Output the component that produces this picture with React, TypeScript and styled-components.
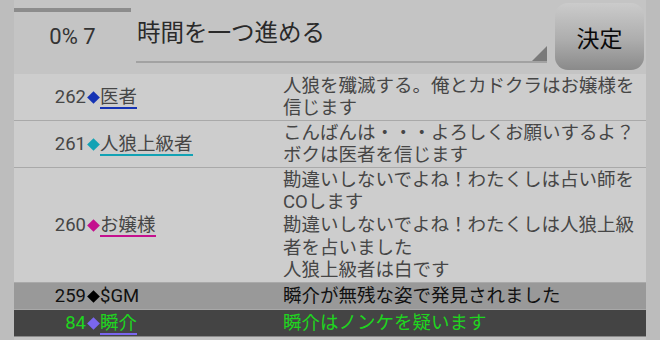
import React from 'react';
import styled, { createGlobalStyle } from 'styled-components';

const GlobalStyle = createGlobalStyle`
    html, body {
        margin: 0;
        padding: 0;
        background: #c2c2c2;
    }
    body {
        width: 660px;
        height: 340px;
        overflow: hidden;
        font-family: Roboto, 'Noto Sans CJK JP', 'Noto Sans', sans-serif;
    }
`;

type Kind = 'talk' | 'system' | 'self';

interface LogEntry {
    no: number;
    name: string;
    color: string;
    lines: string[];
    kind: Kind;
}

const logs: LogEntry[] = [
    { no: 262, name: '医者', color: '#1533b4', kind: 'talk', lines: ['人狼を殲滅する。俺とカドクラはお嬢様を信じます'] },
    { no: 261, name: '人狼上級者', color: '#12a2b4', kind: 'talk', lines: ['こんばんは・・・よろしくお願いするよ？ボクは医者を信じます'] },
    {
        no: 260,
        name: 'お嬢様',
        color: '#c4108e',
        kind: 'talk',
        lines: ['勘違いしないでよね！わたくしは占い師をCOします', '勘違いしないでよね！わたくしは人狼上級者を占いました', '人狼上級者は白です'],
    },
    { no: 259, name: '$GM', color: '#000000', kind: 'system', lines: ['瞬介が無残な姿で発見されました'] },
    { no: 84, name: '瞬介', color: '#7a66f0', kind: 'self', lines: ['瞬介はノンケを疑います'] },
];

const App: React.FC = () => {
    return (
        <Page>
            <GlobalStyle />
            <Header>
                <Status>
                    <Progress />
                    <StatusText>0% 7</StatusText>
                </Status>
                <Select>
                    <SelectText>時間を一つ進める</SelectText>
                    <Corner />
                </Select>
                <Decide>決定</Decide>
            </Header>
            <Log>
                {logs.map(log => (
                    <Row key={log.no} kind={log.kind}>
                        <No>{log.no}</No>
                        <DiamondCell>
                            <Diamond color={log.color} />
                        </DiamondCell>
                        <NameCell>
                            <Name color={log.color} underline={log.kind !== 'system'}>
                                {log.name}
                            </Name>
                        </NameCell>
                        <Message>
                            {log.lines.map((line, i) => (
                                <div key={i}>{line}</div>
                            ))}
                        </Message>
                    </Row>
                ))}
            </Log>
        </Page>
    );
};

export default App;

const Page = styled.div`
    width: 660px;
    height: 340px;
    overflow: hidden;
    background: linear-gradient(to right, #bdbdbd 0, #bdbdbd 14px, #c4c4c4 14px, #c4c4c4 646px, #bcbcbc 646px);
`;

const Header = styled.div`
    display: flex;
    align-items: flex-start;
    height: 74px;
    padding-left: 14px;
`;

const Status = styled.div`
    width: 117px;
    padding-top: 8px;
`;

const Progress = styled.div`
    height: 4px;
    background: #8c8c8c;
`;

const StatusText = styled.div`
    margin-top: 12px;
    text-align: center;
    font-size: 22px;
    line-height: 26px;
    color: #333;
`;

const Select = styled.div`
    position: relative;
    width: 411px;
    height: 61px;
    margin-left: 5px;
    border-bottom: 2px solid #a2a2a2;
`;

const SelectText = styled.div`
    padding: 18px 0 0 1px;
    font-size: 23.5px;
    line-height: 30px;
    color: #2a2a2a;
`;

const Corner = styled.div`
    position: absolute;
    right: 0;
    bottom: 0;
    width: 0;
    height: 0;
    border-left: 15px solid transparent;
    border-bottom: 15px solid #7a7a7a;
`;

const Decide = styled.div`
    display: flex;
    align-items: center;
    justify-content: center;
    width: 89px;
    height: 67px;
    margin: 3px 0 0 8px;
    border-radius: 13px;
    background: linear-gradient(to bottom, #cbcbcb 0%, #adadad 55%, #8a8a8a 100%);
    font-size: 23px;
    color: #0a0a0a;
`;

const Log = styled.div`
    margin: 0 14px;
`;

const Row = styled.div<{ kind: Kind }>`
    display: grid;
    grid-template-columns: 72px 14px 183px 1fr;
    align-items: center;
    font-size: 18.5px;
    line-height: 22.6px;
    padding: ${p => (p.kind === 'talk' ? '0.5px 0' : '1.5px 0')};
    background: ${p => (p.kind === 'talk' ? '#cdcdcd' : p.kind === 'system' ? '#999999' : '#444444')};
    color: ${p => (p.kind === 'talk' ? '#464646' : p.kind === 'system' ? '#111' : '#1fd51f')};
    border-bottom: 1px solid ${p => (p.kind === 'talk' ? '#a9a9a9' : p.kind === 'system' ? '#a8a8a8' : '#8a8a8a')};
    & + & {
        border-top: ${p => (p.kind === 'system' ? '1px solid #bdbdbd' : 'none')};
    }
`;

const No = styled.div`
    text-align: right;
`;

const DiamondCell = styled.div`
    display: flex;
    align-items: center;
    justify-content: center;
`;

const Diamond = styled.div<{ color: string }>`
    width: 9px;
    height: 9px;
    background: ${p => p.color};
    transform: rotate(45deg);
`;

const NameCell = styled.div``;

const Name = styled.span<{ color: string; underline: boolean }>`
    display: inline-block;
    line-height: 20px;
    border-bottom: 2px solid ${p => (p.underline ? p.color : 'transparent')};
`;

const Message = styled.div`
    padding-right: 6px;
`;
